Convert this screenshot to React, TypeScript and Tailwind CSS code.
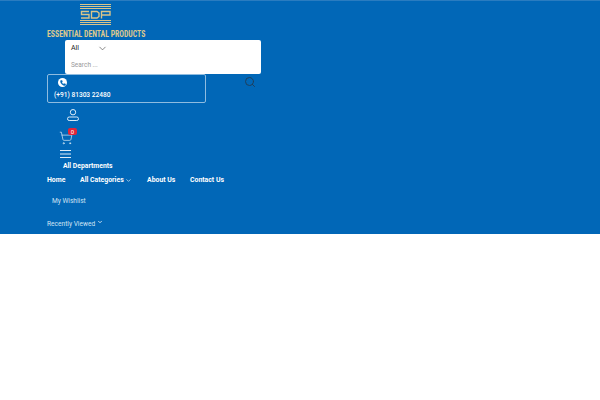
import React from 'react'
import { ChevronDown, Search, ShoppingCart, Phone } from 'lucide-react'

const font = { fontFamily: 'Roboto, "Liberation Sans", sans-serif' }

function Logo() {
  return (
    <div className="flex flex-col items-start">
      <svg width="32" height="21" viewBox="0 0 32 21" className="ml-[33px] mt-[3px]" fill="none" stroke="#d8c48a">
        <path d="M0 .5h31M0 2.500h31M0 4.500h31M0 16.500h31M0 18.500h31M0 20.500h31" />
        <path d="M9 7.500H1.500v3H9v3.500H1M11.500 7.500H17l2 1.500v3.500L17 14h-5.500zM21.500 14.500v-7H30v3.500h-8.500" strokeWidth="1.400" />
      </svg>
      <span className="mt-[4px] text-[8.5px] leading-[10px] font-bold whitespace-nowrap text-[#dcc88e] [font-family:'Roboto_Condensed',Roboto,sans-serif] origin-left scale-x-[0.91]">
        ESSENTIAL DENTAL PRODUCTS
      </span>
    </div>
  )
}

export default function App() {
  return (
    <div className="bg-white min-h-[400px]" style={font}>
      <header className="h-[234px] bg-[#0167b7] border-t border-[#2a7cc0] pl-[47px] text-white">
        <Logo />

        <div className="ml-[18px] mt-[1px] w-[196px] h-[34px] bg-white rounded-[2px]">
          <div className="flex items-center h-[16px] pl-[6px] text-[7px] text-[#222]">
            <span className="w-[26px]">All</span>
            <ChevronDown size={11} strokeWidth={1.5} className="text-[#555]" />
          </div>
          <div className="mt-[2px] pl-[6px] text-[6.5px] leading-[14px] text-[#999]">Search ...</div>
        </div>

        <div className="flex items-start">
          <div className="w-[159px] h-[29px] border border-[#8fbce0] rounded-[2px] pl-[6px]">
            <div className="ml-[4px] mt-[3px] w-[9px] h-[9px] rounded-full bg-white flex items-center justify-center">
              <Phone size={6} className="text-[#0167b7] fill-[#0167b7]" />
            </div>
            <div className="mt-[3px] text-[6.6px] leading-[11px] font-medium whitespace-nowrap">(+91) 81303 22480</div>
          </div>
          <Search size={12} strokeWidth={2} className="ml-[38px] mt-[2px] text-[#1f3f5c]" />
        </div>

        <svg width="12" height="12" viewBox="0 0 12 12" fill="none" stroke="#dcecf8" className="ml-[20px] mt-[6px]">
          <circle cx="6" cy="3.200" r="2.700" />
          <rect x="0.500" y="8" width="11" height="3.500" rx="1.700" />
        </svg>

        <div className="relative mt-[10px] ml-[12px] w-[14px] h-[14px]">
          <ShoppingCart size={14} strokeWidth={1.2} className="text-[#dcecf8]" />
          <span className="absolute left-[9px] top-[-3px] w-[9px] h-[7px] bg-[#e0263c] rounded-[2px] text-[6px] leading-[7px] text-center text-white">0</span>
        </div>

        <svg width="11" height="8" viewBox="0 0 11 8" stroke="#dcecf8" className="ml-[13px] mt-[5px]">
          <path d="M0 .5h11M0 4h11M0 7.500h11" />
        </svg>

        <div className="ml-[16px] mt-[4px] text-[6.8px] leading-[9px] font-bold">All Departments</div>

        <nav className="flex mt-[3px] text-[6.9px] leading-[12px] font-bold whitespace-nowrap">
          <span className="w-[33px]">Home</span>
          <span className="w-[67px] flex items-center">
            All Categories
            <ChevronDown size={7} className="ml-[1px]" />
          </span>
          <span className="w-[43px]">About Us</span>
          <span>Contact Us</span>
        </nav>

        <div className="ml-[5px] mt-[10px] text-[6.6px] leading-[11px] text-[#cfe4f4]">My Wishlist</div>

        <div className="flex mt-[12px] text-[6.6px] leading-[11px] text-[#cfe4f4]">
          <span>Recently Viewed</span>
          <ChevronDown size={6} strokeWidth={3} className="ml-[2px] text-white" />
        </div>
      </header>
    </div>
  )
}
